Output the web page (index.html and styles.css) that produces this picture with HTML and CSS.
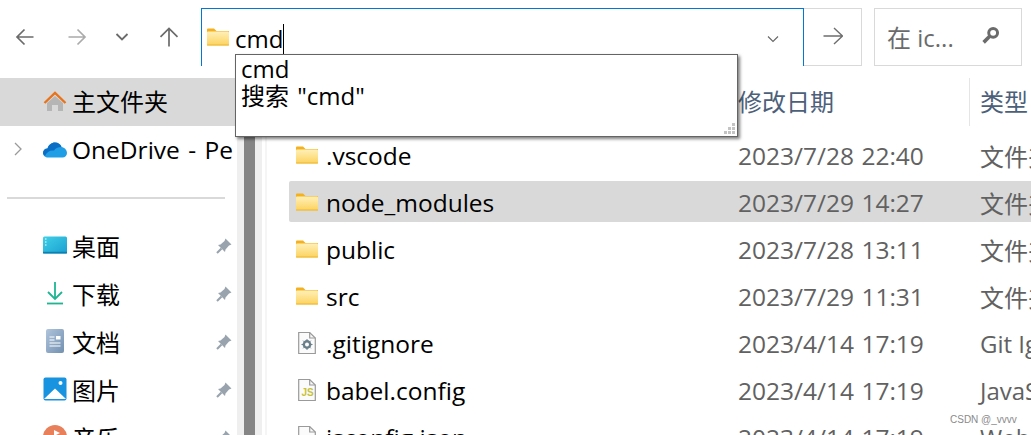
FILE: index.html
```html
<!DOCTYPE html>
<html lang="zh-CN">
<head>
    <meta charset="UTF-8">
    <title>文件资源管理器</title>
    <link rel="stylesheet" href="styles.css">
</head>
<body>
    <div class="window">
        <div class="toolbar">
            <div class="nav">
                <svg class="nav-icon back" viewBox="0 0 20 20"><path d="M18.500 10H1.800M9.500 2.500L2 10l7.500 7.500" fill="none" stroke="#6b6b6b" stroke-width="1.700"/></svg>
                <svg class="nav-icon forward" viewBox="0 0 20 20"><path d="M1.500 10h16.700M10.500 2.500L18 10l-7.500 7.500" fill="none" stroke="#ababab" stroke-width="1.700"/></svg>
                <svg class="nav-chevron" viewBox="0 0 14 10"><path d="M1.500 2l5.500 5.500L12.500 2" fill="none" stroke="#6b6b6b" stroke-width="1.800"/></svg>
                <svg class="nav-icon up" viewBox="0 0 20 20"><path d="M10 19.500V1.500M1.500 9.800L10 1.500l8.500 8.300" fill="none" stroke="#6b6b6b" stroke-width="1.700"/></svg>
            </div>
            <div class="address">
                <svg class="folder" viewBox="0 0 22 18"><use href="#folder-icon"/></svg>
                <span class="address-text">cmd</span><span class="caret"></span>
                <svg class="address-chevron" viewBox="0 0 12 8"><path d="M1 1.500l5 5 5-5" fill="none" stroke="#666" stroke-width="1.100"/></svg>
            </div>
            <div class="go">
                <svg class="go-icon" viewBox="0 0 20 20"><path d="M0.500 10h19M11 2l8.500 8-8.500 8" fill="none" stroke="#6e6e6e" stroke-width="1.400"/></svg>
            </div>
            <div class="search">
                <span class="search-text">在 ic...</span>
                <svg class="search-icon" viewBox="0 0 18 18"><circle cx="11.500" cy="6.500" r="4.200" fill="none" stroke="#6b6b6b" stroke-width="2.800"/><path d="M8 10L2.500 15.500" stroke="#6b6b6b" stroke-width="3.400"/></svg>
            </div>
        </div>

        <div class="main">
            <div class="sidebar">
                <div class="side-row home">
                    <svg class="side-icon" viewBox="0 0 24 24"><path d="M4 13v8h5v-6h6v6h5v-8l-8-7z" fill="#b5b5b5"/><path d="M1.500 13L12 3l10.500 10" fill="none" stroke="#e8731a" stroke-width="2.400"/></svg>
                    <span class="home-label">主文件夹</span>
                </div>
                <div class="side-row drive">
                    <svg class="expander" viewBox="0 0 8 14"><path d="M1 1l6 6-6 6" fill="none" stroke="#9a9a9a" stroke-width="1.300"/></svg>
                    <svg class="side-icon" viewBox="0 0 24 16"><path d="M5 15.500C1.500 15.500 0 13 0 11c0-2.500 2-4.500 4.500-4.500C5.500 3 8.500 0.500 12 0.500c3 0 5.500 1.500 6.500 4.500C21.500 5.500 24 8 24 11c0 2.500-2 4.500-4.500 4.500z" fill="#1f9ee6"/><path d="M2 14C0.500 12.500 0 11.500 0 11c0-2.500 2-4.500 4.500-4.500C5.500 3 8.500 0.500 12 0.500c3 0 5.500 1.500 6.500 4.500-4 0-6 1.500-7.500 3.500C7 8 3.500 10 2 14z" fill="#0a6fc4"/></svg>
                    <span class="drive-name">OneDrive - Pe</span>
                </div>
                <div class="side-divider"></div>
                <div class="side-row quick">
                    <svg class="side-icon" viewBox="0 0 24 18"><rect y="0.500" width="24" height="17" rx="1.500" fill="url(#desk-fill)"/><rect y="15.800" width="24" height="1.700" fill="#0f7fb0"/><path d="M2 3h1.500M2 6h1.500M2 9h1.500" stroke="#fff" stroke-width="1.200"/></svg>
                    <span>桌面</span>
                    <svg class="pin"><use href="#pin-icon"/></svg>
                </div>
                <div class="side-row quick">
                    <svg class="side-icon" viewBox="0 0 24 24"><path d="M12 1v17M5 11l7 7 7-7" fill="none" stroke="#1fb592" stroke-width="1.800"/><path d="M4 22.500h16" stroke="#1fb592" stroke-width="1.800"/></svg>
                    <span>下载</span>
                    <svg class="pin"><use href="#pin-icon"/></svg>
                </div>
                <div class="side-row quick">
                    <svg class="side-icon" viewBox="0 0 24 24"><rect x="3" y="0" width="18" height="24" rx="2" fill="url(#doc-fill)"/><path d="M6.500 8h5M6.500 11h5M6.500 14h11M6.500 17h11" stroke="#fff" stroke-width="1.100"/><rect x="13" y="7" width="4.500" height="3.500" fill="#fff"/></svg>
                    <span>文档</span>
                    <svg class="pin"><use href="#pin-icon"/></svg>
                </div>
                <div class="side-row quick">
                    <svg class="side-icon" viewBox="0 0 24 24"><rect x="0.500" y="0.500" width="23" height="23" rx="2" fill="#1793e0"/><path d="M1 22L12 11.500 23 22z" fill="#fff"/><circle cx="17.500" cy="6" r="2" fill="#fff"/></svg>
                    <span>图片</span>
                    <svg class="pin"><use href="#pin-icon"/></svg>
                </div>
                <div class="side-row quick">
                    <svg class="side-icon" viewBox="0 0 24 24"><circle cx="12" cy="12" r="12" fill="#e8805c"/><path d="M11 5l6 3-4 2v8h-2z" fill="#fff"/></svg>
                    <span>音乐</span>
                    <svg class="pin"><use href="#pin-icon"/></svg>
                </div>
            </div>

            <div class="scrollbar"><div class="thumb"></div></div>

            <div class="files">
                <div class="file-head">
                    <span class="col-date">修改日期</span>
                    <span class="head-sep"></span>
                    <span class="col-type">类型</span>
                </div>
                <div class="file-row">
                    <svg class="file-icon" viewBox="0 0 22 18"><use href="#folder-icon"/></svg>
                    <span class="col-name">.vscode</span><span class="col-date">2023/7/28 22:40</span><span class="col-type">文件夹</span>
                </div>
                <div class="file-row selected">
                    <svg class="file-icon" viewBox="0 0 22 18"><use href="#folder-icon"/></svg>
                    <span class="col-name">node_modules</span><span class="col-date">2023/7/29 14:27</span><span class="col-type">文件夹</span>
                </div>
                <div class="file-row">
                    <svg class="file-icon" viewBox="0 0 22 18"><use href="#folder-icon"/></svg>
                    <span class="col-name">public</span><span class="col-date">2023/7/28 13:11</span><span class="col-type">文件夹</span>
                </div>
                <div class="file-row">
                    <svg class="file-icon" viewBox="0 0 22 18"><use href="#folder-icon"/></svg>
                    <span class="col-name">src</span><span class="col-date">2023/7/29 11:31</span><span class="col-type">文件夹</span>
                </div>
                <div class="file-row">
                    <svg class="file-icon" viewBox="0 0 22 24"><use href="#page-icon"/><circle cx="11" cy="13.500" r="3.200" fill="none" stroke="#6b7f8a" stroke-width="2.400"/><path d="M11 8v11M5.500 13.500h11M7.200 9.700l7.600 7.600M14.800 9.700l-7.600 7.600" stroke="#6b7f8a" stroke-width="1" stroke-dasharray="2 7"/></svg>
                    <span class="col-name">.gitignore</span><span class="col-date">2023/4/14 17:19</span><span class="col-type">Git Ignore</span>
                </div>
                <div class="file-row">
                    <svg class="file-icon" viewBox="0 0 22 24"><use href="#page-icon"/><text x="5.500" y="17.500" class="js-mark">JS</text></svg>
                    <span class="col-name">babel.config</span><span class="col-date">2023/4/14 17:19</span><span class="col-type">JavaScript</span>
                </div>
                <div class="file-row">
                    <svg class="file-icon" viewBox="0 0 22 24"><use href="#page-icon"/></svg>
                    <span class="col-name">jsconfig.json</span><span class="col-date">2023/4/14 17:19</span><span class="col-type">Web</span>
                </div>
            </div>
        </div>

        <div class="suggest">
            <div>cmd</div>
            <div class="suggest-second">搜索 "cmd"</div>
            <svg class="grip" viewBox="0 0 12 12"><path d="M8 0h3v3H8zM4 4h3v3H4zM8 4h3v3H8zM0 8h3v3H0zM4 8h3v3H4zM8 8h3v3H8z" fill="#c4c4c4"/></svg>
        </div>

        <div class="watermark">CSDN @_vvvv</div>
    </div>

    <svg class="defs" width="0" height="0">
        <defs>
            <linearGradient id="folder-fill" x1="0" y1="0" x2="0" y2="1">
                <stop offset="0" stop-color="#fff0b8"/>
                <stop offset="1" stop-color="#fcd25e"/>
            </linearGradient>
            <linearGradient id="desk-fill" x1="0" y1="0" x2="1" y2="1">
                <stop offset="0" stop-color="#3fd0e6"/>
                <stop offset="1" stop-color="#1a9fd2"/>
            </linearGradient>
            <linearGradient id="doc-fill" x1="0" y1="0" x2="1" y2="1">
                <stop offset="0" stop-color="#b0c4dc"/>
                <stop offset="1" stop-color="#7290b0"/>
            </linearGradient>
            <symbol id="folder-icon" viewBox="0 0 22 18">
                <path d="M0 1.500C0 1 .5 .5 1 .5h6l2.500 2.500H22v3H0z" fill="#f5b01e"/>
                <rect x="0" y="3.500" width="22" height="14" rx="1" fill="url(#folder-fill)"/>
                <rect x="0" y="16.500" width="22" height="1" fill="#eeb52e"/>
            </symbol>
            <symbol id="page-icon" viewBox="0 0 22 24">
                <path d="M2.700 1.500h11L19.300 7v15.500H2.700z" fill="#fbfbfb" stroke="#9a9a9a" stroke-width="1.200"/>
                <path d="M13.700 1.500V7h5.600" fill="none" stroke="#9a9a9a" stroke-width="1.200"/>
            </symbol>
            <symbol id="pin-icon" viewBox="0 0 16 16">
                <path d="M9.500 0.500L15.500 6.500 13 7.500 9.500 11.500 9 14 2 7l2.500-.5L8.500 3z" fill="#98a3ad"/>
                <path d="M5.500 10.500L1 15" stroke="#98a3ad" stroke-width="2.200"/>
            </symbol>
        </defs>
    </svg>
</body>
</html>
```

FILE: styles.css
```css
html, body {
    margin: 0;
    height: 100%;
    overflow: hidden;
    background: #fff;
}
body {
    font-family: "Open Sans", "Noto Sans CJK SC", sans-serif;
    font-size: 24px;
    color: #000;
}
.window {
    position: relative;
    width: 1031px;
    height: 435px;
    overflow: hidden;
}
.defs {
    position: absolute;
}

/* top bar */
.toolbar {
    display: flex;
    padding-top: 8px;
    box-sizing: border-box;
    height: 78px;
}
.nav {
    width: 201px;
    height: 58px;
    display: flex;
    align-items: center;
    box-sizing: border-box;
    padding-left: 15px;
}
.nav-icon {
    width: 20px;
    height: 20px;
    flex: none;
}
.forward {
    margin-left: 32px;
}
.nav-chevron {
    width: 14px;
    height: 10px;
    margin-left: 28px;
}
.up {
    margin-left: 30px;
}
.address {
    width: 603px;
    height: 58px;
    box-sizing: border-box;
    border: 1px solid #0078d4;
    border-bottom: none;
    display: flex;
    align-items: center;
    padding-left: 5px;
}
.folder {
    width: 22px;
    height: 18px;
    margin-top: -1px;
}
.address-text {
    margin-left: 6px;
    line-height: 28px;
    margin-top: 3px;
}
.caret {
    width: 1px;
    height: 31px;
    background: #000;
    margin-top: 3px;
}
.address-chevron {
    width: 12px;
    height: 8px;
    margin-left: auto;
    margin-right: 24px;
    margin-top: 2px;
}
.go {
    width: 58px;
    height: 58px;
    box-sizing: border-box;
    border: 1px solid #d9d9d9;
    border-left: none;
    display: flex;
    align-items: center;
    justify-content: center;
}
.go-icon {
    width: 20px;
    height: 20px;
    margin-top: -2px;
}
.search {
    width: 148px;
    height: 58px;
    margin-left: 12px;
    box-sizing: border-box;
    border: 1px solid #d9d9d9;
    display: flex;
    align-items: center;
    padding: 0 21px 0 12px;
    color: #6b6b6b;
}
.search-text {
    margin-top: -2px;
}
.search-icon {
    width: 19px;
    height: 19px;
    margin-left: auto;
    margin-top: -4px;
}

/* left side */
.main {
    display: flex;
}
.sidebar {
    width: 237px;
    flex: none;
}
.side-row {
    position: relative;
    height: 48px;
    display: flex;
    align-items: center;
    padding-left: 43px;
}
.side-icon {
    width: 24px;
    height: 24px;
    margin-right: 5px;
    flex: none;
}
.home {
    background: #d9d9d9;
}
.home-label {
    margin-top: -4px;
}
.expander {
    position: absolute;
    left: 14px;
    top: 16px;
    width: 8px;
    height: 14px;
}
.drive {
    height: 47px;
    white-space: nowrap;
    overflow: hidden;
    padding-right: 4px;
}
.drive-name {
    font-size: 24.5px;
    word-spacing: 2px;
}
.side-divider {
    height: 2px;
    margin: 24px 12px 0 7px;
    background: #d9d9d9;
}
.quick {
    height: 48px;
}
.quick:nth-of-type(4) {
    margin-top: 22px;
}
.pin {
    position: absolute;
    left: 216px;
    top: 17px;
    width: 16px;
    height: 16px;
}
.scrollbar {
    width: 25px;
    flex: none;
    background: #efefef;
    display: flex;
    justify-content: center;
    height: 357px;
}
.thumb {
    width: 11px;
    height: 100%;
    background: #858585;
    margin-right: 1px;
}

/* file list */
.files {
    flex: 1;
    margin-left: 3px;
    border-left: 2px solid #f5f5f5;
    min-width: 0;
    padding-left: 22px;
}
.file-head {
    height: 48px;
    display: flex;
    align-items: center;
    color: #4c607a;
}
.file-head span {
    margin-top: -4px;
}
.file-head .col-date {
    margin-left: 449px;
    width: 231px;
}
.file-head .head-sep {
    width: 1px;
    height: 48px;
    margin-top: 0;
    background: #e5e5e5;
}
.file-head .col-type {
    margin-left: 10px;
}
.file-row {
    height: 41px;
    margin-top: 6px;
    display: flex;
    align-items: center;
    white-space: nowrap;
    border-radius: 2px 0 0 2px;
    padding-left: 7px;
}
.file-row:nth-child(2) {
    margin-top: 8px;
}
.file-row span {
    margin-top: 2px;
}
.selected {
    background: #d9d9d9;
}
.file-icon {
    width: 22px;
    height: 24px;
    flex: none;
}
.col-name {
    margin-left: 8px;
    width: 412px;
    flex: none;
    font-size: 24.5px;
}
.file-row .col-date {
    width: 242px;
    flex: none;
    color: #616161;
    font-size: 24.5px;
    word-spacing: 1px;
}
.file-row .col-type {
    color: #616161;
}
.js-mark {
    font-family: "Liberation Sans", sans-serif;
    font-size: 10px;
    font-weight: 700;
    fill: #c8c23c;
}

/* autocomplete popup */
.suggest {
    position: absolute;
    left: 235px;
    top: 54px;
    width: 503px;
    height: 83px;
    box-sizing: border-box;
    border: 1px solid #646464;
    background: #fff;
    box-shadow: 2px 2px 3px rgba(0, 0, 0, 0.5);
    padding-left: 5px;
    line-height: 27px;
}
.suggest-second {
    word-spacing: 2px;
}
.grip {
    position: absolute;
    right: 1px;
    bottom: 1px;
    width: 12px;
    height: 12px;
}
.watermark {
    position: absolute;
    left: 950px;
    top: 414px;
    font-family: "Liberation Sans", sans-serif;
    font-size: 10px;
    color: #8a8a8a;
}
```
